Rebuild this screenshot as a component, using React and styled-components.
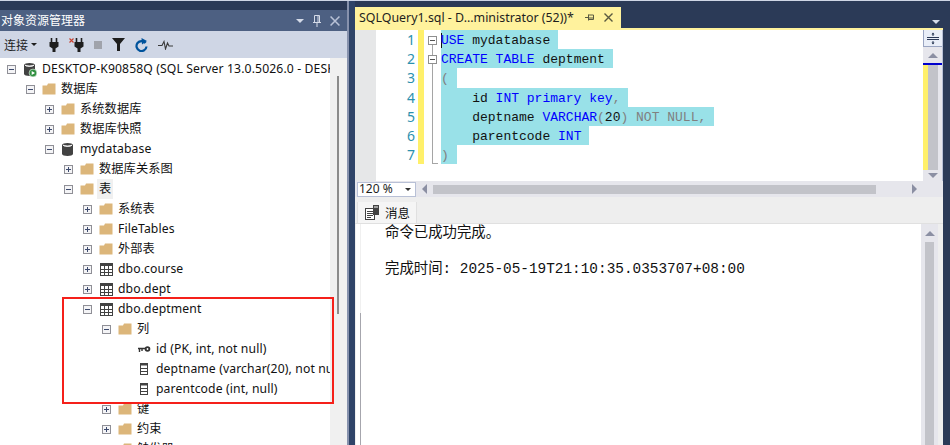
import React from "react";
import styled, { createGlobalStyle } from "styled-components";

const GlobalStyle = createGlobalStyle`
  html, body {
    margin: 0;
    padding: 0;
    background: #2b3a57;
    overflow: hidden;
  }
`;

const uiFont = `"Noto Sans", "Noto Sans CJK SC", sans-serif`;
const monoFont = `"Liberation Mono", "Noto Sans CJK SC", monospace`;

const Page = styled.div`
  width: 950px;
  height: 445px;
  display: flex;
  flex-direction: column;
  overflow: hidden;
  background: #2b3a57;
  border-top: 1px solid #cfd6e5;
  box-sizing: border-box;
`;

const Columns = styled.div`
  flex: 1;
  min-height: 0;
  display: flex;
`;

/* left: object explorer */
const Explorer = styled.div`
  width: 347px;
  flex: none;
  padding-top: 9px;
  display: flex;
  flex-direction: column;
  min-height: 0;
`;

const TitleBar = styled.div`
  height: 21px;
  flex: none;
  background: #4d6082;
  color: #fff;
  font: 12px/21px ${uiFont};
  display: flex;
  align-items: center;
  justify-content: space-between;
  padding: 0 7px 0 1px;
`;

const TitleIcons = styled.div`
  display: flex;
  align-items: center;
  gap: 9px;
`;

const ToolBar = styled.div`
  height: 27px;
  flex: none;
  background: #cfd6e5;
  display: flex;
  align-items: center;
  padding-left: 4px;
  color: #1e1e1e;
  font: 12px ${uiFont};
`;

const ToolLabel = styled.span`
  margin-right: 3px;
`;

const ToolGroup = styled.div`
  display: flex;
  align-items: center;
  gap: 10px;
  margin-left: 12px;
`;

const TreeArea = styled.div`
  position: relative;
  flex: 1;
  min-height: 0;
  background: #fff;
  display: flex;
  overflow: hidden;
`;

const Tree = styled.div`
  width: 330px;
  flex: none;
  overflow: hidden;
  padding-top: 1px;
`;

const Row = styled.div`
  height: 20px;
  display: flex;
  align-items: center;
  padding-left: ${(p) => 7 + p.$level * 19}px;
  white-space: nowrap;
  font: 12.2px/20px ${uiFont};
  letter-spacing: 0.12px;
  color: #111;
`;

const ExpandBox = styled.span`
  width: 7px;
  height: 7px;
  flex: none;
  border: 1px solid #8f8f96;
  background: #f4f4f6;
  position: relative;
  margin-right: 7px;
  &::before {
    content: "";
    position: absolute;
    left: 1px;
    top: 3px;
    width: 5px;
    height: 1px;
    background: #3c4a6e;
  }
  &::after {
    content: "";
    display: ${(p) => (p.$open ? "none" : "block")};
    position: absolute;
    left: 3px;
    top: 1px;
    width: 1px;
    height: 5px;
    background: #3c4a6e;
  }
`;

const NoBox = styled.span`
  width: 9px;
  flex: none;
  margin-right: 7px;
`;

const RowIcon = styled.span`
  width: 14px;
  height: 16px;
  flex: none;
  display: flex;
  align-items: center;
  justify-content: center;
  margin-right: 3px;
`;

const RowText = styled.span`
  align-self: stretch;
  padding: 0 2px;
  background: ${(p) => (p.$hover ? "#f0f0f0" : "transparent")};
`;

const TreeScroll = styled.div`
  width: 17px;
  flex: none;
  background: #f0f0f0;
  padding: 18px 0 0 7px;
  box-sizing: border-box;
`;

const TreeThumb = styled.div`
  width: 2px;
  height: 238px;
  background: #8b8b8b;
`;

const RedBox = styled.div`
  position: absolute;
  left: 62px;
  top: 239px;
  width: 268px;
  height: 103px;
  border: 2px solid #f5201a;
  pointer-events: none;
`;

/* splitter between panels */
const Splitter = styled.div`
  width: 8px;
  flex: none;
  background: #2f4468;
  border-left: 2px solid #8792ad;
  box-sizing: border-box;
`;

/* right: editor and results */
const Workspace = styled.div`
  flex: 1;
  min-width: 0;
  padding-right: 7px;
  display: flex;
  flex-direction: column;
`;

const TabStrip = styled.div`
  height: 27px;
  flex: none;
  display: flex;
  align-items: flex-end;
  justify-content: space-between;
  padding-top: 6px;
  box-sizing: border-box;
`;

const DocTab = styled.div`
  width: 266px;
  height: 21px;
  background: #fff29d;
  color: #1e1e1e;
  font: 12.4px/21px ${uiFont};
  display: flex;
  align-items: center;
  justify-content: space-between;
  padding: 0 8px 0 4px;
  box-sizing: border-box;
  white-space: nowrap;
`;

const TabIcons = styled.div`
  display: flex;
  align-items: center;
  gap: 10px;
`;

const StripMenu = styled.div`
  align-self: center;
  margin: 8px 0 0;
  padding-right: 3px;
  display: flex;
`;

const EditorTop = styled.div`
  height: 2px;
  flex: none;
  background: #fff29d;
`;

const EditorRow = styled.div`
  height: 151px;
  flex: none;
  display: flex;
  background: #fff;
`;

const Margin = styled.div`
  width: 21px;
  flex: none;
  background: #e6e7e8;
`;

const Numbers = styled.div`
  width: 39px;
  flex: none;
  text-align: right;
  color: #2b91af;
  font: 14px/19.2px ${uiFont};
  margin-right: 1px;
`;

const ChangeBar = styled.div`
  width: 6px;
  height: 134px;
  flex: none;
  margin-left: 2px;
  background: #fff06a;
`;

const Fold = styled.div`
  width: 17px;
  flex: none;
  position: relative;
`;

const FoldBox = styled.span`
  position: absolute;
  left: 4px;
  top: ${(p) => p.$top}px;
  width: 7px;
  height: 7px;
  border: 1px solid #8f8f8f;
  background: #fff;
  &::before {
    content: "";
    position: absolute;
    left: 1px;
    top: 3px;
    width: 5px;
    height: 1px;
    background: #555;
  }
`;

const FoldLink = styled.span`
  position: absolute;
  left: 8px;
  top: 15px;
  height: 10px;
  border-left: 1px solid #a5a5a5;
`;

const FoldLine = styled.span`
  position: absolute;
  left: 8px;
  top: 34px;
  width: 5px;
  height: 99px;
  border-left: 1px solid #a5a5a5;
  border-bottom: 1px solid #a5a5a5;
`;

const Code = styled.div`
  flex: 1;
  min-width: 0;
  overflow: hidden;
`;

const CodeLine = styled.div`
  height: 19.2px;
  font: 13px/21px ${monoFont};
  white-space: pre;
  color: #111;
`;

const Selected = styled.span`
  display: block;
  width: fit-content;
  height: 100%;
  background: #99e1e8;
  padding-right: 8px;
`;

const Kw = styled.span`
  color: #0000ff;
`;

const Gray = styled.span`
  color: #808080;
`;

const Caret = styled.span`
  border-left: 1px solid #111;
  margin-right: -1px;
`;

const VBar = styled.div`
  width: 20px;
  flex: none;
  background: #e6e6ec;
  display: flex;
  flex-direction: column;
  align-items: stretch;
  box-sizing: border-box;
  border-right: 1px solid #b8c0d6;
`;

const SplitButton = styled.div`
  height: 16px;
  flex: none;
  background: #e9eef8;
  border-left: 1px solid #9aa5c2;
  border-bottom: 1px solid #9aa5c2;
  display: flex;
  align-items: center;
  justify-content: center;
`;

const ArrowCell = styled.div`
  height: ${(p) => p.$h}px;
  flex: none;
  display: flex;
  align-items: center;
  justify-content: center;
`;

const CaretMark = styled.div`
  height: 2px;
  flex: none;
  background: #0000cd;
`;

const MapTrack = styled.div`
  flex: 1;
  display: flex;
`;

const MapChange = styled.div`
  width: 5px;
  background: #fff06a;
`;

const MapThumb = styled.div`
  width: 10px;
  background: #c2c3c9;
`;

const HBar = styled.div`
  height: 16px;
  flex: none;
  background: #e6e6ec;
  display: flex;
  align-items: center;
`;

const ZoomBox = styled.div`
  width: 59px;
  height: 15px;
  margin-left: 2px;
  flex: none;
  box-sizing: border-box;
  background: #fff;
  border: 1px solid #b8c0d6;
  color: #1e1e1e;
  font: 12px/14px ${uiFont};
  padding: 0 4px 0 1px;
  display: flex;
  align-items: center;
  justify-content: space-between;
`;

const HThumbRow = styled.div`
  flex: 1;
  display: flex;
  align-items: center;
  padding: 0 26px 0 6px;
  gap: 6px;
`;

const HThumb = styled.div`
  flex: 1;
  height: 9px;
  background: #c2c3c9;
  margin-right: 30px;
`;

const Results = styled.div`
  flex: 1;
  min-height: 0;
  display: flex;
  flex-direction: column;
  background: #eeeeee;
`;

const ResultTabs = styled.div`
  height: 27px;
  flex: none;
  display: flex;
  align-items: flex-end;
  padding-left: 2px;
  border-bottom: 1px solid #e0e0e0;
  box-sizing: border-box;
`;

const ResultTab = styled.div`
  width: 60px;
  height: 21px;
  box-sizing: border-box;
  background: #f5f5f5;
  border-right: 1px solid #e0e0e0;
  border-left: 1px solid #e0e0e0;
  display: flex;
  align-items: center;
  gap: 5px;
  padding-left: 7px;
  color: #111;
  font: 12.5px ${uiFont};
`;

const ResultBody = styled.div`
  flex: 1;
  min-height: 0;
  margin: 0 5px 0 1px;
  display: flex;
  background: #fff;
`;

const EdgeColumn = styled.div`
  width: 1px;
  flex: none;
  margin-left: 4px;
  display: flex;
  flex-direction: column;
`;

const EdgeSoft = styled.div`
  height: 89px;
  flex: none;
  background: #f0f0f0;
`;

const EdgeHard = styled.div`
  flex: 1;
  background: #a6a6ad;
`;

const Messages = styled.div`
  flex: 1;
  min-width: 0;
  padding: 0 0 0 24px;
  font: 14.4px/18px ${monoFont};
  color: #111;
  white-space: pre;
  overflow: hidden;
`;

const MessageLine = styled.div`
  height: 18px;
`;

const ResultScroll = styled.div`
  width: 17px;
  flex: none;
  background: #e6e6ec;
  display: flex;
  flex-direction: column;
`;

const ResultThumb = styled.div`
  flex: 1;
  margin: 0 4px;
  background: #c2c3c9;
`;

/* drawn icons */
const Folder = () => (
  <svg width="14" height="12" viewBox="0 0 14 12">
    <path d="M0.5 2.5 L0.5 11.5 L13.5 11.5 L13.5 0.5 L6 0.5 L5 2.5 Z" fill="#dcb67a" />
  </svg>
);

const TableIcon = () => (
  <svg width="13" height="13" viewBox="0 0 13 13">
    <rect x="0.5" y="0.5" width="12" height="12" fill="#fff" stroke="#424242" />
    <rect x="0" y="0" width="13" height="3" fill="#424242" />
    <path d="M4.5 3V13M8.5 3V13M0 6.5H13M0 9.5H13" stroke="#424242" fill="none" />
  </svg>
);

const ColumnIcon = () => (
  <svg width="8" height="12" viewBox="0 0 8 12">
    <rect x="0.5" y="0.5" width="7" height="11" fill="#fff" stroke="#424242" />
    <rect x="0" y="0" width="8" height="2.5" fill="#424242" />
    <path d="M0 5.5H8M0 8.5H8" stroke="#424242" />
  </svg>
);

const KeyIcon = () => (
  <svg width="13" height="7" viewBox="0 0 13 7">
    <circle cx="9.5" cy="3" r="2.8" fill="#333" />
    <circle cx="9.5" cy="3" r="0.9" fill="#fff" />
    <path d="M0 2.5H7M1.5 2.5V6M4 2.5V5" stroke="#333" strokeWidth="1.4" fill="none" />
  </svg>
);

const DbIcon = ({ running }) => (
  <svg width="14" height="15" viewBox="0 0 14 15">
    <path d="M1 3 C1 0.3 12 0.3 12 3 V12 C12 14.6 1 14.6 1 12 Z" fill="#424242" />
    <path d="M2 3.2 C3.5 4.8 9.5 4.8 11 3.2 C9.5 4.2 3.5 4.2 2 3.2Z" fill="#fff" stroke="#fff" strokeWidth="0.8" />
    {running && <circle cx="10" cy="11" r="3.9" fill="#2f8f3f" stroke="#fff" strokeWidth="0.6" />}
    {running && <path d="M8.7 9 L12 11 L8.7 13 Z" fill="#fff" />}
  </svg>
);

const Plug = () => (
  <svg width="10" height="14" viewBox="0 0 10 14">
    <path d="M2.5 0V4M7.5 0V4" stroke="#1e1e1e" strokeWidth="1.6" />
    <path d="M0.5 4H9.5V8.5L6.5 10.5V14H3.5V10.5L0.5 8.5Z" fill="#1e1e1e" />
  </svg>
);

const PlugX = () => (
  <svg width="15" height="14" viewBox="0 0 15 14">
    <path d="M0.5 0.5L4.5 4.5M4.5 0.5L0.5 4.5" stroke="#c8402e" strokeWidth="1.1" />
    <path d="M7.5 0V4M12.5 0V4" stroke="#1e1e1e" strokeWidth="1.6" />
    <path d="M5.5 4H14.5V8.5L11.5 10.5V14H8.5V10.5L5.5 8.5Z" fill="#1e1e1e" />
  </svg>
);

const StopSquare = () => (
  <svg width="8" height="8" viewBox="0 0 8 8">
    <rect width="8" height="8" fill="#a0a3ab" />
  </svg>
);

const Funnel = () => (
  <svg width="13" height="13" viewBox="0 0 13 13">
    <path d="M0 0H13L8 6V13H5V6Z" fill="#1e1e1e" />
  </svg>
);

const Refresh = () => (
  <svg width="13" height="14" viewBox="0 0 13 14">
    <path d="M10.5 5 A5 5 0 1 0 11.5 8.5" stroke="#00539c" strokeWidth="2.2" fill="none" />
    <path d="M6.5 0 L12 3 L7 6.5 Z" fill="#00539c" />
  </svg>
);

const Activity = () => (
  <svg width="15" height="10" viewBox="0 0 15 10">
    <path d="M0 5.5H4L6 1.5L7.5 9L9.5 3L11 6H15" stroke="#3a3a3a" strokeWidth="1.1" fill="none" />
  </svg>
);

const Triangle = ({ dir = "down", color = "#8b8fa3", size = 5 }) => {
  const shapes = {
    down: `0,0 ${size * 2},0 ${size},${size}`,
    up: `0,${size} ${size * 2},${size} ${size},0`,
    left: `${size},0 ${size},${size * 2} 0,${size}`,
    right: `0,0 0,${size * 2} ${size},${size}`,
  };
  const wide = dir === "up" || dir === "down";
  return (
    <svg width={wide ? size * 2 : size} height={wide ? size : size * 2}>
      <polygon points={shapes[dir]} fill={color} />
    </svg>
  );
};

const PinIcon = ({ color, small }) =>
  small ? (
    <svg width="9" height="9" viewBox="0 0 9 9">
      <path d="M0 4.5H3M3.5 1.5V7.5M3.5 2H8.5V6.5H3.5M3.5 5H8.5" stroke={color} fill="none" />
    </svg>
  ) : (
    <svg width="8" height="12" viewBox="0 0 8 12">
      <path d="M1.5 7V0.5H6.5V7M5 0.5V7M0 7.5H8M4 7.5V12" stroke={color} fill="none" />
    </svg>
  );

const CloseIcon = ({ color, size = 9 }) => (
  <svg width={size} height={size} viewBox="0 0 9 9">
    <path d="M0.5 0.5L8.5 8.5M8.5 0.5L0.5 8.5" stroke={color} strokeWidth="1.4" />
  </svg>
);

const SplitIcon = () => (
  <svg width="12" height="13" viewBox="0 0 12 13">
    <path d="M0 5.5H12M0 7.5H12" stroke="#2b3a57" />
    <path d="M6 1V4M6 9V12" stroke="#2b3a57" />
    <path d="M4.5 2.5L6 0.5L7.5 2.5ZM4.5 10.5L6 12.5L7.5 10.5Z" fill="#2b3a57" />
  </svg>
);

const MessageIcon = () => (
  <svg width="15" height="15" viewBox="0 0 15 15">
    <rect x="0.5" y="3.5" width="9" height="11" fill="#fff" stroke="#424242" />
    <path d="M2 6.5H8M2 8.5H8M2 10.5H8M2 12.5H6" stroke="#424242" />
    <rect x="8" y="0" width="6" height="10" fill="#424242" />
    <path d="M9 2H13" stroke="#fff" />
  </svg>
);

const treeRows = [
  { level: 0, state: "open", icon: "server", text: "DESKTOP-K90858Q (SQL Server 13.0.5026.0 - DESKTOP-K90858Q\\Administrator)" },
  { level: 1, state: "open", icon: "folder", text: "数据库" },
  { level: 2, state: "closed", icon: "folder", text: "系统数据库" },
  { level: 2, state: "closed", icon: "folder", text: "数据库快照" },
  { level: 2, state: "open", icon: "db", text: "mydatabase" },
  { level: 3, state: "closed", icon: "folder", text: "数据库关系图" },
  { level: 3, state: "open", icon: "folder", text: "表", hover: true },
  { level: 4, state: "closed", icon: "folder", text: "系统表" },
  { level: 4, state: "closed", icon: "folder", text: "FileTables" },
  { level: 4, state: "closed", icon: "folder", text: "外部表" },
  { level: 4, state: "closed", icon: "table", text: "dbo.course" },
  { level: 4, state: "closed", icon: "table", text: "dbo.dept" },
  { level: 4, state: "open", icon: "table", text: "dbo.deptment" },
  { level: 5, state: "open", icon: "folder", text: "列" },
  { level: 6, icon: "key", text: "id (PK, int, not null)" },
  { level: 6, icon: "column", text: "deptname (varchar(20), not null)" },
  { level: 6, icon: "column", text: "parentcode (int, null)" },
  { level: 5, state: "closed", icon: "folder", text: "键" },
  { level: 5, state: "closed", icon: "folder", text: "约束" },
  { level: 5, state: "closed", icon: "folder", text: "触发器" },
];

const rowIcons = {
  server: <DbIcon running />,
  db: <DbIcon />,
  folder: <Folder />,
  table: <TableIcon />,
  key: <KeyIcon />,
  column: <ColumnIcon />,
};

export default function App() {
  return (
    <Page>
      <GlobalStyle />
      <Columns>
        <Explorer>
          <TitleBar>
            <span>对象资源管理器</span>
            <TitleIcons>
              <Triangle color="#d5dbe8" size={4} />
              <PinIcon color="#d5dbe8" />
              <CloseIcon color="#b9c2d6" size={10} />
            </TitleIcons>
          </TitleBar>
          <ToolBar>
            <ToolLabel>连接</ToolLabel>
            <Triangle color="#1e1e1e" size={3} />
            <ToolGroup>
              <Plug />
              <PlugX />
              <StopSquare />
              <Funnel />
              <Refresh />
              <Activity />
            </ToolGroup>
          </ToolBar>
          <TreeArea>
            <Tree>
              {treeRows.map((row, i) => (
                <Row key={i} $level={row.level}>
                  {row.state ? <ExpandBox $open={row.state === "open"} /> : <NoBox />}
                  <RowIcon>{rowIcons[row.icon]}</RowIcon>
                  <RowText $hover={row.hover}>{row.text}</RowText>
                </Row>
              ))}
            </Tree>
            <TreeScroll>
              <TreeThumb />
            </TreeScroll>
            <RedBox />
          </TreeArea>
        </Explorer>
        <Splitter />
        <Workspace>
          <TabStrip>
            <DocTab>
              <span>SQLQuery1.sql - D...ministrator (52))*</span>
              <TabIcons>
                <PinIcon color="#5a5a40" small />
                <CloseIcon color="#5a5a40" />
              </TabIcons>
            </DocTab>
            <StripMenu>
              <Triangle color="#d5dbe8" size={4} />
            </StripMenu>
          </TabStrip>
          <EditorTop />
          <EditorRow>
            <Margin />
            <Numbers>
              {[1, 2, 3, 4, 5, 6, 7].map((n) => (
                <div key={n}>{n}</div>
              ))}
            </Numbers>
            <ChangeBar />
            <Fold>
              <FoldBox $top={6} />
              <FoldLink />
              <FoldBox $top={25} />
              <FoldLine />
            </Fold>
            <Code>
              <CodeLine>
                <Selected>
                  <Caret />
                  <Kw>USE</Kw> mydatabase
                </Selected>
              </CodeLine>
              <CodeLine>
                <Selected>
                  <Kw>CREATE TABLE</Kw> deptment
                </Selected>
              </CodeLine>
              <CodeLine>
                <Selected>
                  <Gray>(</Gray>
                </Selected>
              </CodeLine>
              <CodeLine>
                <Selected>
                  {"    id "}
                  <Kw>INT primary key</Kw>
                  <Gray>,</Gray>
                </Selected>
              </CodeLine>
              <CodeLine>
                <Selected>
                  {"    deptname "}
                  <Kw>VARCHAR</Kw>
                  <Gray>(</Gray>20<Gray>) NOT NULL,</Gray>
                </Selected>
              </CodeLine>
              <CodeLine>
                <Selected>
                  {"    parentcode "}
                  <Kw>INT</Kw>
                </Selected>
              </CodeLine>
              <CodeLine>
                <Selected>
                  <Gray>)</Gray>
                </Selected>
              </CodeLine>
            </Code>
            <VBar>
              <SplitButton>
                <SplitIcon />
              </SplitButton>
              <ArrowCell $h={16}>
                <Triangle dir="up" size={5} />
              </ArrowCell>
              <CaretMark />
              <MapTrack>
                <MapChange />
                <MapThumb />
              </MapTrack>
              <ArrowCell $h={11}>
                <Triangle size={5} />
              </ArrowCell>
            </VBar>
          </EditorRow>
          <HBar>
            <ZoomBox>
              <span>120 %</span>
              <Triangle color="#333" size={3} />
            </ZoomBox>
            <HThumbRow>
              <Triangle dir="left" size={5} />
              <HThumb />
              <Triangle dir="right" size={5} />
            </HThumbRow>
          </HBar>
          <Results>
            <ResultTabs>
              <ResultTab>
                <MessageIcon />
                消息
              </ResultTab>
            </ResultTabs>
            <ResultBody>
              <EdgeColumn>
                <EdgeSoft />
                <EdgeHard />
              </EdgeColumn>
              <Messages>
                <MessageLine>命令已成功完成。</MessageLine>
                <MessageLine />
                <MessageLine>完成时间: 2025-05-19T21:10:35.0353707+08:00</MessageLine>
              </Messages>
              <ResultScroll>
                <ArrowCell $h={18}>
                  <Triangle dir="up" size={5} />
                </ArrowCell>
                <ResultThumb />
              </ResultScroll>
            </ResultBody>
          </Results>
        </Workspace>
      </Columns>
    </Page>
  );
}
